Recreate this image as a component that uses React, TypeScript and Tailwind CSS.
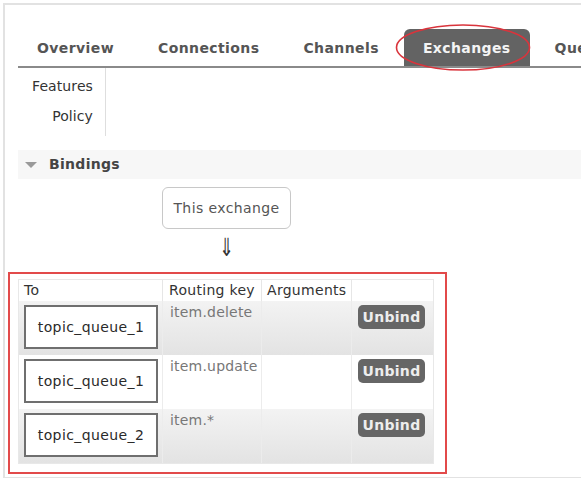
import React from "react";

const font = { fontFamily: '"DejaVu Sans", Verdana, sans-serif' };

function QueueBox({ name }: { name: string }) {
  return (
    <div className="mt-[4px] ml-[5px] flex h-[44px] w-[134px] items-center justify-center border-2 border-[#6f6f6f] bg-white text-[14px] tracking-[0.4px] text-[#2a2a2a]">
      {name}
    </div>
  );
}

function Row({ name, keyText, gray, h }: { name: string; keyText: string; gray: boolean; h: string }) {
  const bg = gray ? "bg-gradient-to-b from-[#f3f3f3] to-[#e3e3e3]" : "bg-white";
  return (
    <div className={`grid grid-cols-[144px_99px_90px_83px] ${h} ${bg}`}>
      <div className="border-r border-[#ececec]">
        <QueueBox name={name} />
      </div>
      <div className="border-r border-[#ececec] pl-[7px] pt-[3px] text-[14px] leading-[17px] tracking-[0.2px] text-[#777]">{keyText}</div>
      <div className="border-r border-[#ececec]" />
      <div className="pl-[6px] pt-[4px]">
        <div className="flex h-[24px] w-[67px] items-center justify-center rounded-[5px] bg-[#666] text-[14px] font-bold tracking-[0.3px] text-[#ededed]">
          Unbind
        </div>
      </div>
    </div>
  );
}

export default function App() {
  const tabs = ["Overview", "Connections", "Channels", "Exchanges", "Queues"];
  return (
    <div className="relative h-[479px] w-[581px] overflow-hidden bg-white" style={font}>
      <div className="pl-[3px] pt-[3px]">
        <div className="h-[475px] border-b border-l-2 border-t-2 border-[#e2e2e2]">
          {/* Tabs */}
          <div className="ml-[13px] mt-[24px] flex h-[39px] items-end gap-[6px] border-b-2 border-[#8a8a8a] whitespace-nowrap">
            {tabs.map((t) => (
              <div
                key={t}
                className={
                  t === "Exchanges"
                    ? "flex h-[37px] shrink-0 items-center rounded-t-[6px] bg-[#636363] px-[19px] pt-[2px] text-[14px] font-bold tracking-[0.4px] text-[#f4f4f4]"
                    : "flex h-[37px] shrink-0 items-center px-[19px] pt-[2px] text-[14px] font-bold tracking-[0.4px] text-[#555]"
                }
              >
                {t}
              </div>
            ))}
          </div>
          {/* Sub nav */}
          <div className="ml-[13px] w-[88px] border-r border-[#dedede] pb-[5px] pr-[12px] pt-[3px] text-right text-[14px] leading-[30px] tracking-[0.1px] text-[#333]">
            <div>Features</div>
            <div>Policy</div>
          </div>
          {/* Bindings bar */}
          <div className="ml-[13px] mt-[14px] flex h-[29px] items-center bg-[#f7f7f7]">
            <svg width="12" height="8" viewBox="0 0 12 8" className="ml-[7px]">
              <polygon points="0,1 12,1 6,7" fill="#9a9a9a" />
            </svg>
            <span className="ml-[12px] text-[14px] font-bold tracking-[0.3px] text-[#444]">Bindings</span>
          </div>
          {/* This exchange */}
          <div className="ml-[157px] mt-[8px] flex h-[42px] w-[129px] items-center justify-center rounded-[6px] border border-[#c8c8c8] text-[14px] tracking-[0.4px] text-[#555]">
            This exchange
          </div>
          <div className="ml-[157px] mt-[7px] flex h-[24px] w-[129px] justify-center text-[25px] leading-[24px] text-[#333]">
            <span className="inline-block scale-x-[0.7]">⇓</span>
          </div>
          {/* Table with red annotation */}
          <div className="ml-[3px] mt-[12px] w-[439px] border-2 border-[#e24a4a] pb-[8px] pl-[8px] pr-[11px] pt-[5px]">
            <div className="w-[416px] border border-[#e8e8e8] bg-white text-[14px]">
              <div className="grid h-[21px] grid-cols-[144px_99px_90px_83px] leading-[21px] tracking-[0.3px] text-[#333]">
                <div className="border-r border-[#e6e6e6] pl-[5px]">To</div>
                <div className="border-r border-[#e6e6e6] pl-[6px]">Routing key</div>
                <div className="border-r border-[#e6e6e6] pl-[5px]">Arguments</div>
                <div />
              </div>
              <Row name="topic_queue_1" keyText="item.delete" gray h="h-[54px]" />
              <Row name="topic_queue_1" keyText="item.update" gray={false} h="h-[54px]" />
              <Row name="topic_queue_2" keyText="item.*" gray h="h-[54px]" />
            </div>
          </div>
        </div>
      </div>
      {/* red ellipse annotation */}
      <svg className="absolute left-[395px] top-[23px]" width="136" height="49" viewBox="0 0 136 49">
        <ellipse cx="68" cy="24.5" rx="66.5" ry="22.5" fill="none" stroke="#d9343c" strokeWidth="1.6" />
      </svg>
    </div>
  );
}
